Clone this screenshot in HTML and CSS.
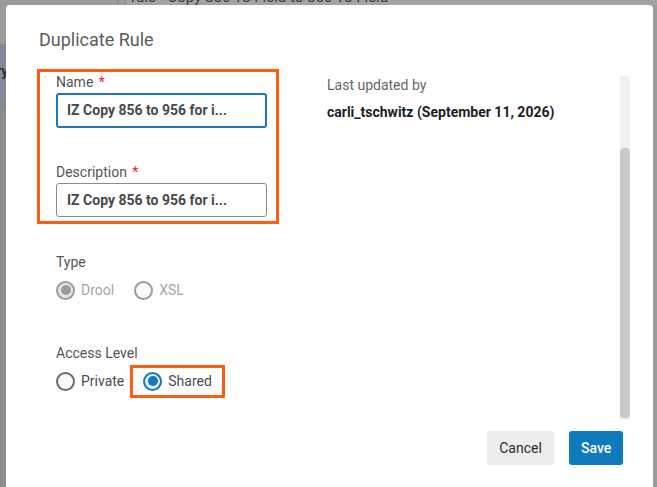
FILE: index.html
```html
<!DOCTYPE html>
<html lang="en">
<head>
<meta charset="utf-8">
<title>Duplicate Rule</title>
<link rel="stylesheet" href="styles.css">
</head>
<body>
<div class="backdrop">
  <div class="bg-sidebar">
    <div class="bg-side-top"></div>
    <div class="bg-side-block"><span class="bg-side-text">ry</span></div>
  </div>
  <div class="bg-main">
    <div class="bg-row"><span class="bg-row-text">rule - Copy 856 To Field to 856 To Field</span></div>
  </div>
</div>

<div class="dialog" role="dialog" aria-labelledby="dlg-title">
  <h1 class="dialog-title" id="dlg-title">Duplicate Rule</h1>
  <div class="dialog-body">
    <div class="col-form">
      <div class="highlight name-group">
        <label class="field-label">Name <span class="req">*</span></label>
        <div class="input input-focus">IZ Copy 856 to 956 for i...</div>
        <label class="field-label desc-label">Description <span class="req">*</span></label>
        <div class="input">IZ Copy 856 to 956 for i...</div>
      </div>

      <div class="field-label group-label type-label">Type</div>
      <div class="radio-row">
        <span class="radio-opt disabled"><span class="radio checked"></span>Drool</span>
        <span class="radio-opt disabled xsl"><span class="radio"></span>XSL</span>
      </div>

      <div class="field-label group-label access-label">Access Level</div>
      <div class="radio-row access-row">
        <span class="radio-opt"><span class="radio"></span>Private</span>
        <span class="highlight shared-box"><span class="radio-opt"><span class="radio checked"></span>Shared</span></span>
      </div>
    </div>

    <div class="col-info">
      <div class="info-label">Last updated by</div>
      <div class="info-value">carli_tschwitz (September 11, 2026)</div>
    </div>

    <div class="scrollbar"><div class="thumb"></div></div>
  </div>
  <div class="dialog-footer">
    <button class="btn btn-cancel">Cancel</button>
    <button class="btn btn-save">Save</button>
  </div>
</div>
</body>
</html>
```
FILE: styles.css
```css
* { box-sizing: border-box; }
html, body { margin: 0; padding: 0; }
body {
  width: 657px;
  height: 487px;
  overflow: hidden;
  background: #9a9a9a;
  font-family: Roboto, "Liberation Sans", Arial, sans-serif;
  position: relative;
}

/* dimmed page behind the modal */
.backdrop {
  display: flex;
  height: 487px;
}
.bg-sidebar {
  width: 118px;
  background: #8c8c8c;
  border-right: 1px solid #858585;
  display: flex;
  flex-direction: column;
}
.bg-side-top { height: 44px; background: #9b9b9b; }
.bg-side-block {
  height: 64px;
  background: #7f8b98;
  display: flex;
  align-items: center;
}
.bg-side-text {
  font-weight: 700;
  font-size: 14px;
  color: #2c2c2c;
  margin-left: -4px;
  margin-top: -10px;
}
.bg-main { flex: 1; background: #9c9c9c; }
.bg-row {
  height: 5px;
  overflow: hidden;
  border-left: 1px solid #8a8a8a;
  margin-left: 7px;
  padding-left: 5px;
  background: #a3a3a3;
}
.bg-row-text {
  display: block;
  font-size: 15px;
  line-height: 15px;
  margin-top: -10px;
  color: #3a3a3a;
}

/* modal */
.dialog {
  position: absolute;
  left: 6px;
  top: 5px;
  width: 647px;
  height: 492px;
  background: #fff;
  border-radius: 4px 4px 0 0;
  padding: 23px 23px 0 31px;
}
.dialog-title {
  margin: 0 0 0 2px;
  font-size: 18px;
  line-height: 24px;
  font-weight: 400;
  color: #5c5c5c;
}
.dialog-body {
  display: flex;
  margin-top: 17px;
  height: 351px;
}
.col-form {
  width: 242px;
  flex: none;
}
.highlight {
  border: 3px solid #ff5b10;
}
.name-group {
  padding: 0 9px 4px 16px;
}
.field-label {
  display: block;
  font-size: 14px;
  line-height: 20px;
  color: #555;
}
.req { color: #e0262b; margin-left: 2px; }
.input {
  margin-top: 1px;
  height: 34px;
  border: 1px solid #8a8a8a;
  border-radius: 3px;
  padding: 0 10px;
  font-size: 14px;
  font-weight: 700;
  color: #484848;
  line-height: 32px;
  white-space: nowrap;
  overflow: hidden;
}
.input-focus {
  height: 35px;
  border: 2px solid #1b78bd;
  padding: 0 9px;
  line-height: 31px;
}
.desc-label { margin-top: 34px; }

.group-label { margin-left: 19px; }
.type-label { margin-top: 28px; }
.radio-row {
  display: flex;
  align-items: center;
  margin: 8px 0 0 19px;
  height: 20px;
}
.radio-opt {
  display: inline-flex;
  align-items: center;
  gap: 6px;
  font-size: 14px;
  line-height: 20px;
  color: #4d4d4d;
}
.radio-opt.disabled { color: #a6a6a6; }
.xsl { margin-left: 20px; }
.radio {
  width: 19px;
  height: 19px;
  border-radius: 50%;
  border: 2px solid #6a6a6a;
  background: #fafafa;
  display: inline-flex;
  align-items: center;
  justify-content: center;
}
.radio.checked {
  border-color: #1577bb;
  background: #e2eef8;
}
.radio.checked::after {
  content: "";
  width: 10px;
  height: 10px;
  border-radius: 50%;
  background: #1577bb;
}
.disabled .radio { border-color: #9c9c9c; }
.disabled .radio.checked { background: #dce8f1; }
.disabled .radio.checked::after { background: #9a9a9a; }

.access-label { margin-top: 43px; }
.access-row { margin-top: 8px; }
.shared-box {
  margin-left: 6px;
  height: 33px;
  padding: 0 10px 0 10px;
  display: inline-flex;
  align-items: center;
}

.col-info {
  margin-left: 48px;
  padding-top: 6px;
}
.info-label {
  font-size: 14px;
  line-height: 20px;
  color: #666;
}
.info-value {
  margin-top: 7px;
  font-size: 14px;
  line-height: 20px;
  font-weight: 700;
  color: #1e1e1e;
}

.scrollbar {
  margin-left: auto;
  margin-top: 7px;
  width: 10px;
  height: 344px;
  background: #f1f1f1;
  padding-top: 72px;
}
.thumb {
  height: 270px;
  background: #c9c9c9;
  border-radius: 4px;
}

.dialog-footer {
  display: flex;
  justify-content: flex-end;
  gap: 15px;
  margin-top: 11px;
  padding-right: 7px;
}
.btn {
  height: 34px;
  border: none;
  border-radius: 3px;
  font-family: Roboto, "Liberation Sans", Arial, sans-serif;
  font-size: 14px;
  padding: 0 12px;
  cursor: pointer;
}
.btn-cancel {
  width: 67px;
  background: #ededed;
  color: #2b2b2b;
}
.btn-save {
  width: 54px;
  background: #0f7bbd;
  color: #fff;
  font-weight: 500;
}
```
